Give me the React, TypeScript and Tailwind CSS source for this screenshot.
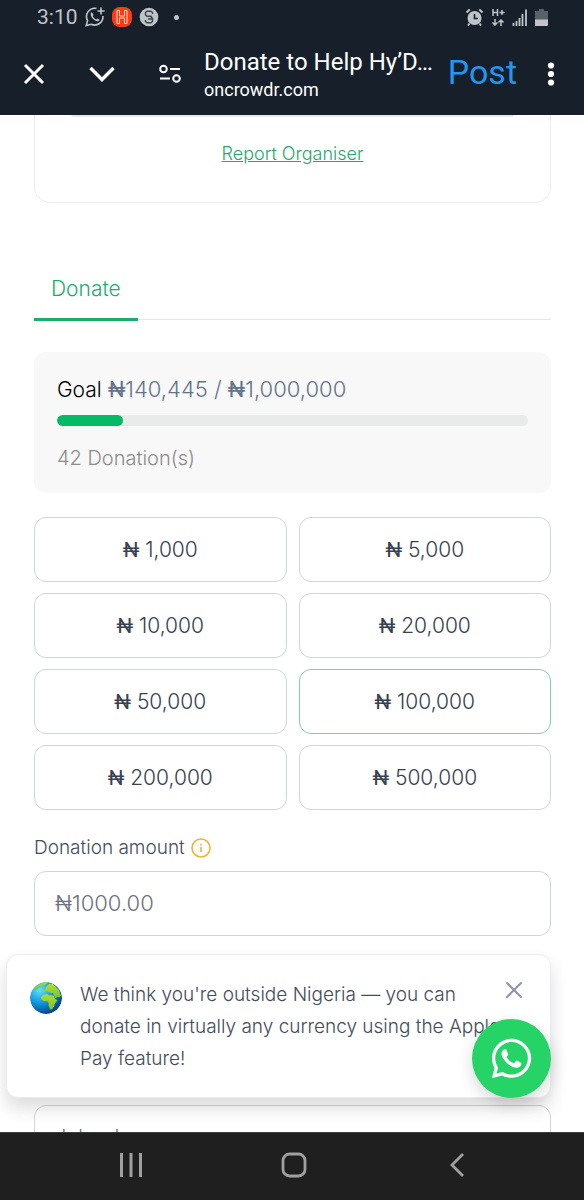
import { useState } from "react";
import { FaWhatsapp } from "react-icons/fa";

const AMOUNTS = ["1,000", "5,000", "10,000", "20,000", "50,000", "100,000", "200,000", "500,000"];

const RAISED = 140445;
const GOAL = 1000000;

function StatusBar() {
  return (
    <div className="flex h-[34px] items-center justify-between pl-[37px] pr-[36px] text-[#bfc4c9]">
      <div className="flex items-center gap-[7px]">
        <span className="text-[21px] leading-[34px]">3:10</span>
        <svg className="size-5" viewBox="0 0 20 20" fill="none" stroke="currentColor" strokeWidth="1.6">
          <path d="M11.5 1.4A8.3 8.3 0 0 0 2.6 13.6L1.2 18.6l5-1.3A8.3 8.3 0 0 0 17.9 9" />
          <path d="M16 0.5v7M12.5 4h7" />
          <path
            d="M7 5.3c-.6 0-1.4.7-1.3 2 .2 3.3 3.6 6.7 6.9 6.9 1.2 0 1.9-.7 1.9-1.5l-2.2-1.2-1 1c-1.6-.6-3-2-3.6-3.5l.9-1z"
            fill="currentColor"
            stroke="none"
          />
        </svg>
        <svg className="size-5" viewBox="0 0 20 20">
          <rect width="20" height="20" rx="8" fill="#f93c12" />
          <path
            d="M5 3.500h2.500v5.500h5V3.500H15v13h-2.500V11h-5v5.500H5z"
            fill="none"
            stroke="#ffd5ca"
            strokeWidth="1"
          />
        </svg>
        <svg className="size-5" viewBox="0 0 20 20">
          <circle cx="10" cy="10" r="9.3" fill="currentColor" />
          <path
            d="M13.500 7V5.500L12 4.300H8L6.500 5.500v2.500L8 9.300h4l.5.700v2H9M6.500 13v1.500L8 15.700h4l1.500-1.200v-4"
            fill="none"
            stroke="#3c444c"
            strokeWidth="1.4"
          />
        </svg>
        <span className="ml-2 size-[5px] rounded-full bg-current" />
      </div>
      <div className="flex items-center gap-[7px]">
        <svg className="size-[19px]" viewBox="0 0 19 19" fill="none" stroke="currentColor" strokeWidth="2">
          <circle cx="9.5" cy="10" r="7" fill="currentColor" stroke="none" />
          <path d="M1.500 4.500l3.200-3M17.500 4.500l-3.200-3M4.500 15.500l-1.500 2M14.500 15.500l1.500 2" />
          <path d="M9.500 6v4.500H13" stroke="#17202a" strokeWidth="1.6" />
        </svg>
        <svg className="h-[19px] w-[14px]" viewBox="0 0 14 19" fill="none" stroke="currentColor" strokeWidth="1.5">
          <path d="M2 1v7M6.500 1v7M2 4.500h4.500M8.500 4.500h5M11 2v5" />
          <path d="M4 11v6M1.500 14.500L4 17l2.500-2.500M10 18v-6M7.500 14.500L10 12l2.500 2.500" />
        </svg>
        <svg className="h-[19px] w-4" viewBox="0 0 16 19" stroke="currentColor" strokeWidth="1.8">
          <path d="M1.500 18v-3M4.500 18v-5M7.500 18v-8M10.500 18V6M14 18V1.500" />
        </svg>
        <svg className="h-[19px] w-[13px]" viewBox="0 0 13 19">
          <path d="M4 1h5v2h4v9H0V3h4z" fill="#596168" />
          <path d="M0 11.500h13v5.500a1 1 0 0 1-1 1H1a1 1 0 0 1-1-1z" fill="currentColor" />
        </svg>
      </div>
    </div>
  );
}

function BrowserBar() {
  return (
    <div className="flex h-[81px] items-center pb-px pl-[22px] pr-[21px] text-white">
      <button type="button" aria-label="Close">
        <svg className="size-6" viewBox="0 0 24 24" fill="none" stroke="currentColor" strokeWidth="3">
          <path d="M3 3l18 18M21 3L3 21" />
        </svg>
      </button>
      <button type="button" aria-label="Minimise" className="ml-[43px]">
        <svg className="h-6 w-[26px]" viewBox="0 0 26 24" fill="none" stroke="currentColor" strokeWidth="3.4">
          <path d="M1.500 6L13 17.500 24.500 6" />
        </svg>
      </button>
      <button type="button" aria-label="Site settings" className="ml-[44px]">
        <svg className="h-6 w-[22px]" viewBox="0 0 22 24" fill="none" stroke="currentColor" strokeWidth="2">
          <circle cx="4.5" cy="7" r="3.3" />
          <path d="M11 7h10M1 16.500h10" />
          <circle cx="17.5" cy="16.5" r="3.3" />
        </svg>
      </button>
      <div className="ml-[23px] flex-1 whitespace-nowrap pt-[2px]">
        <p className="text-[24px] leading-[30px]">Donate to Help Hy’D…</p>
        <p className="text-[18px] leading-[26px]">oncrowdr.com</p>
      </div>
      <button type="button" className="pb-1 text-[34px] leading-[40px] text-[#2196f3]">
        Post
      </button>
      <button type="button" aria-label="More options" className="ml-[22px]">
        <svg className="h-6 w-6" viewBox="0 0 24 24" fill="currentColor">
          <circle cx="12" cy="3.5" r="3.1" />
          <circle cx="12" cy="12" r="3.1" />
          <circle cx="12" cy="20.5" r="3.1" />
        </svg>
      </button>
    </div>
  );
}

function Naira() {
  return <span className="font-['Roboto',sans-serif] font-normal">₦</span>;
}

function GoalCard() {
  return (
    <section className="mt-8 rounded-xl bg-[#f8f8f8] px-[23px] pb-5 pt-[22px]">
      <p className="text-[22px] leading-[30px] text-[#64748b]">
        <span className="text-[21px] text-black">Goal</span> <Naira />
        {RAISED.toLocaleString("en-US")} / <Naira />
        {GOAL.toLocaleString("en-US")}
      </p>
      <div className="mt-[10px] h-[11px] overflow-hidden rounded-full bg-[#e9eaea]">
        <div className="h-full rounded-full bg-[#04ba64]" style={{ width: `${(RAISED / GOAL) * 100}%` }} />
      </div>
      <p className="mt-[17px] text-[20px] leading-[30px] text-[#8c8c8c]">42 Donation(s)</p>
    </section>
  );
}

function Globe() {
  return (
    <svg className="size-8 shrink-0" viewBox="0 0 32 32">
      <defs>
        <radialGradient id="sea" cx="0.3" cy="0.25" r="0.85">
          <stop offset="0" stopColor="#5fe3fb" />
          <stop offset="0.5" stopColor="#0c93dc" />
          <stop offset="1" stopColor="#06337c" />
        </radialGradient>
        <linearGradient id="land" x1="0" y1="0" x2="0" y2="1">
          <stop offset="0" stopColor="#b0dd2c" />
          <stop offset="1" stopColor="#7cc22c" />
        </linearGradient>
        <clipPath id="disc">
          <circle cx="16" cy="16" r="16" />
        </clipPath>
      </defs>
      <g clipPath="url(#disc)">
        <circle cx="16" cy="16" r="16" fill="url(#sea)" />
        <g fill="url(#land)">
          <path d="M11 15.500l2-2.500 4-1 2 1.200 4.500.2 1.500 3.600 2.500 1.200-3 3.800-.3 2.500-2.200 2.800-2 .2-1.500-4 .2-2.500-1.200-1.800-3.700-.2-2.300-1.500z" />
          <path d="M13 10l.3-1.800 2.200-.7.5-2.500 3-3L23 2l6 6 2 6-2 1.500-1.500-1-2 2-1.500-3-1-2.500-3-.3-2.500-1.500-2 .2z" />
          <path d="M4 7l5-4.500L16 0l2 .8-2.500 1.500-2 1.200-2.500.5L9 6 6.500 7.200z" />
        </g>
      </g>
    </svg>
  );
}

function CurrencyToast({ onClose }: { onClose: () => void }) {
  return (
    <div
      role="status"
      className="absolute bottom-[34px] left-[6px] right-[33px] flex items-start rounded-xl border border-[#ececef] bg-white pb-[22px] pl-[23px] pt-6 shadow-[0_10px_18px_rgba(0,0,0,0.14)]"
    >
      <div className="pt-[3px]">
        <Globe />
      </div>
      <p className="ml-[18px] flex-1 text-[19px] leading-[32px] text-[#434c5c]">
        We think you're outside Nigeria — you can
        <br />
        donate in virtually any currency using the Apple
        <br />
        Pay feature!
      </p>
      <button type="button" aria-label="Dismiss" onClick={onClose} className="absolute right-[26px] top-[25px]">
        <svg className="size-5" viewBox="0 0 20 20" fill="none" stroke="#8d95a5" strokeWidth="2" strokeLinecap="round">
          <path d="M3 3l14 14M17 3L3 17" />
        </svg>
      </button>
    </div>
  );
}

function SystemNav() {
  return (
    <nav className="grid h-[68px] shrink-0 grid-cols-3 items-center border-t border-[#3a3d3f] bg-[#1f1f1f] pb-[3px] pl-[49px] pr-[46px] text-[#a0a0a0]">
      <button type="button" aria-label="Recent apps" className="justify-self-center">
        <svg className="size-7" viewBox="0 0 28 28" stroke="currentColor" strokeWidth="3">
          <path d="M4.500 2v24M14 2v24M23.500 2v24" />
        </svg>
      </button>
      <button type="button" aria-label="Home" className="justify-self-center">
        <svg className="size-7" viewBox="0 0 28 28" fill="none" stroke="currentColor" strokeWidth="2.8">
          <rect x="3" y="3" width="22" height="22" rx="6.5" />
        </svg>
      </button>
      <button type="button" aria-label="Back" className="justify-self-center">
        <svg className="size-7" viewBox="0 0 28 28" fill="none" stroke="currentColor" strokeWidth="2.8">
          <path d="M20 3L9 14l11 11" />
        </svg>
      </button>
    </nav>
  );
}

export default function App() {
  const [selected, setSelected] = useState("100,000");
  const [amount, setAmount] = useState("");
  const [toastOpen, setToastOpen] = useState(true);

  return (
    <div className="flex h-screen flex-col bg-white">
      <header className="shrink-0 bg-[#17202a] font-['Roboto',sans-serif]">
        <StatusBar />
        <BrowserBar />
      </header>

      <div className="relative min-h-0 flex-1 overflow-hidden font-['Inter','Roboto',sans-serif] font-light">
        <main className="h-full overflow-hidden pl-[34px] pr-[33px]">
          <section className="flex flex-col rounded-b-2xl border-x border-b border-[#ededed] pb-[34px] text-center">
            <div className="mx-9 h-[2px] rounded-b-sm bg-[#e5e7eb]" />
            <a href="#report" className="mt-[23px] self-center text-[18px] leading-[28px] text-[#22a86b] underline">
              Report Organiser
            </a>
          </section>

          <div role="tablist" className="mt-[55px] flex border-b border-[#e3e5e8]">
            <button
              type="button"
              role="tab"
              aria-selected="true"
              className="-mb-[2px] border-b-[3px] border-[#1aae69] px-[17px] pb-[13px] pt-[15px] text-[21px] leading-[32px] text-[#1aae69]"
            >
              Donate
            </button>
          </div>

          <GoalCard />

          <div className="mt-6 grid grid-cols-2 gap-x-3 gap-y-[11px]">
            {AMOUNTS.map((value) => (
              <button
                key={value}
                type="button"
                onClick={() => setSelected(value)}
                className={`h-[65px] rounded-xl border pt-[2px] text-[21px] text-[#374151] ${
                  selected === value ? "border-[#7fd0ad]" : "border-[#d1d5db]"
                }`}
              >
                <Naira /> {value}
              </button>
            ))}
          </div>

          <div className="mt-6 flex items-center gap-[6px]">
            <label htmlFor="amount" className="text-[19px] leading-[28px] text-[#434c5c]">
              Donation amount
            </label>
            <svg className="size-5" viewBox="0 0 20 20" fill="none" stroke="#eab42e" strokeWidth="1.6">
              <circle cx="10" cy="10" r="9" />
              <path d="M10 9v5M10 5.800v1.800" />
            </svg>
          </div>
          <input
            id="amount"
            type="text"
            inputMode="decimal"
            value={amount}
            onChange={(e) => setAmount(e.target.value)}
            placeholder="₦1000.00"
            className="mt-[9px] block h-[65px] w-full rounded-xl border border-[#d1d5db] px-5 pb-[2px] text-[22px] text-[#374151] placeholder:text-[#6b7280]"
          />
          <input
            type="text"
            aria-label="Full name"
            placeholder="John doe"
            className="mt-[169px] block h-[65px] w-full rounded-xl border border-[#d1d5db] px-5 pb-[2px] text-[20px] text-[#374151] placeholder:text-[#6b7280]"
          />
        </main>

        {toastOpen && <CurrencyToast onClose={() => setToastOpen(false)} />}

        <a
          href="#whatsapp"
          aria-label="Chat on WhatsApp"
          className="absolute bottom-[34px] right-[33px] flex size-[79px] items-center justify-center rounded-full bg-[#25d366] text-white shadow-[0_6px_16px_rgba(0,0,0,0.16)]"
        >
          <FaWhatsapp className="size-[45px]" />
        </a>
      </div>

      <SystemNav />
    </div>
  );
}
